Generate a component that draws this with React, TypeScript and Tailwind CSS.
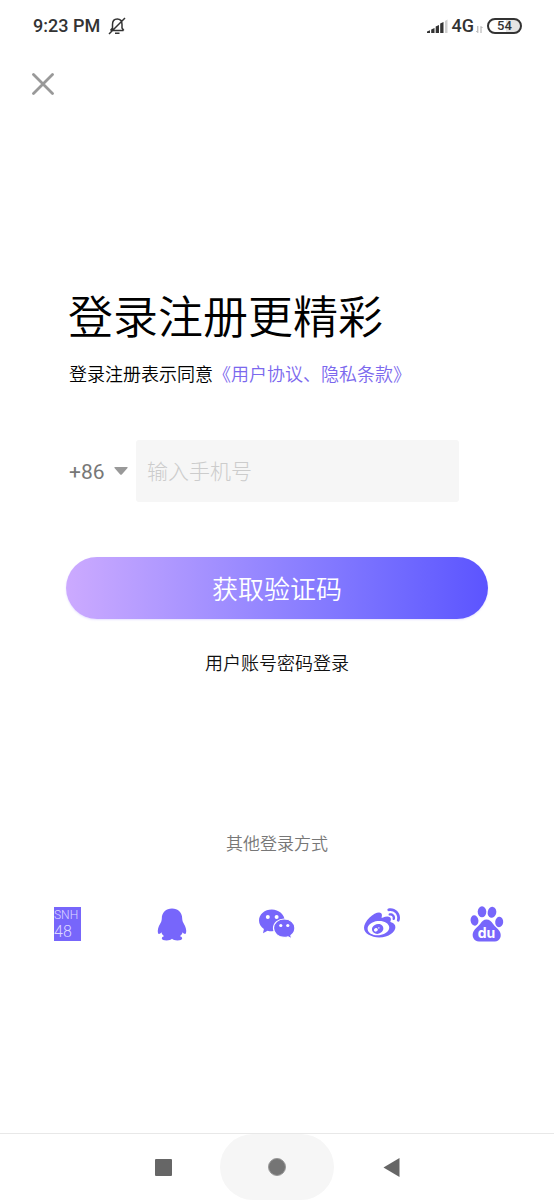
import { useState } from "react";
import type { ReactNode } from "react";
import { FaWeibo } from "react-icons/fa";

type LoginMethod = {
  name: string;
  icon: ReactNode;
};

const loginMethods: LoginMethod[] = [
  { name: "SNH48", icon: <Snh48Icon /> },
  { name: "QQ", icon: <QqIcon /> },
  { name: "微信", icon: <WechatIcon /> },
  { name: "微博", icon: <FaWeibo size={36} /> },
  { name: "百度", icon: <BaiduIcon /> },
];

export default function App() {
  const [phone, setPhone] = useState("");

  return (
    <div className="flex min-h-screen flex-col bg-white font-['Roboto','Noto_Sans_CJK_SC',sans-serif] text-black">
      <StatusBar />

      <header className="flex px-8 pt-[22px]">
        <button type="button" aria-label="关闭" className="text-[#999999]">
          <svg width="22" height="22" viewBox="0 0 22 22" fill="none" stroke="currentColor" strokeWidth="2.8" strokeLinecap="round">
            <path d="M1.5 1.5l19 19M20.5 1.5l-19 19" />
          </svg>
        </button>
      </header>

      <main className="flex flex-col pt-[194px]">
        <form className="flex flex-col px-[66px]" onSubmit={(e) => e.preventDefault()}>
          <h1 className="pl-0.5 text-[45px] leading-[60px] font-[350]">登录注册更精彩</h1>
          <p className="mt-3 pl-[3px] text-[18px] leading-[28px] font-[350] whitespace-nowrap">
            登录注册表示同意
            <a href="#terms" className="text-[#7b68ee]">《用户协议、隐私条款》</a>
          </p>

          <div className="mt-[51px] mr-[29px] flex items-center">
            <div className="relative w-[70px] shrink-0">
              <select aria-label="国家区号" className="w-full appearance-none bg-transparent pt-0.5 pl-[3px] text-[21px] leading-[30px] font-normal text-[#777777] outline-none">
                <option>+86</option>
              </select>
              <svg className="pointer-events-none absolute top-1/2 right-2 -translate-y-1/2" width="14" height="8" viewBox="0 0 14 8" fill="#999999">
                <path d="M1 0h12q1.200 0 .5 1L8 7.300q-1 1-2 0L.500 1Q-.2 0 1 0z" />
              </svg>
            </div>
            <input
              type="tel"
              aria-label="手机号"
              placeholder="输入手机号"
              value={phone}
              onChange={(e) => setPhone(e.target.value)}
              className="h-[62px] min-w-0 flex-1 rounded-[3px] bg-[#f6f6f6] px-[11px] pt-0.5 text-[21px] font-light outline-none placeholder:text-[#cccccc]"
            />
          </div>

          <button
            type="submit"
            className="mt-[55px] h-[62px] rounded-full bg-linear-to-r from-[#ccaaff] to-[#5c54ff] pt-1 text-[26px] font-[350] text-white shadow-[0_1px_2px_rgba(124,104,255,0.2)]"
          >
            获取验证码
          </button>
          <a href="#password" className="mt-[31px] self-center text-[18px] leading-[28px] font-[350] text-[#111111]">用户账号密码登录</a>
        </form>

        <section className="mt-[152px] px-[15px]">
          <h2 className="text-center text-[17px] leading-[28px] font-[350] text-[#777777]">其他登录方式</h2>
          <div className="mt-[46px] grid grid-cols-5 text-[#7766fb]">
            {loginMethods.map((method) => (
              <button key={method.name} type="button" aria-label={method.name} className="flex h-10 items-center justify-center">
                {method.icon}
              </button>
            ))}
          </div>
        </section>
      </main>

      <NavBar />
    </div>
  );
}

function StatusBar() {
  return (
    <div className="flex h-[51px] items-center justify-between pr-8 pl-[33px] text-[18px] font-medium text-[#333333]">
      <div className="flex items-center gap-2">
        <span>9:23 PM</span>
        <svg width="18" height="18" viewBox="0 0 18 18" fill="none" stroke="currentColor" strokeWidth="1.500">
          <path d="M3 13.500h12.500M4.500 13V7.500C4.500 4 6.500 2 9.200 2S14 4 14 7.500V11l1.800 2.500M4.500 11l-2 2.500M7 16.200h4.500M1 17L17 1" />
        </svg>
      </div>
      <div className="flex items-center">
        <svg width="21" height="14" viewBox="0 0 21 14" fill="currentColor">
          <path d="M0 14v-1.500L3 11.200V14zM4.200 14v-3.500L7.500 9v5zM8.700 14V7.500L12 6v8zM13.200 14V4.500L16.500 3v11z" />
          <path d="M18 14V2l2.500-1.500V14z" fill="#cfcfcf" />
        </svg>
        <span className="ml-1">4G</span>
        <svg className="mt-2 ml-0.5" width="7" height="7" viewBox="0 0 7 7" fill="none" stroke="#aaaaaa">
          <path d="M1.800 0v6.500L.3 5M5 7V.5L6.500 2" />
        </svg>
        <span className="ml-1 flex h-4 w-[35px] items-center justify-center rounded-full border-2 border-[#333333] bg-linear-to-r from-white from-55% to-[#e4e4e4] to-55% text-[13px] leading-none">54</span>
      </div>
    </div>
  );
}

function NavBar() {
  return (
    <nav className="mt-auto flex h-[67px] justify-center border-t border-[#e8e8e8] text-[#666666]">
      <button type="button" aria-label="最近任务" className="flex w-[114px] items-center justify-center">
        <span className="size-[17px] rounded-[1px] bg-current" />
      </button>
      <button type="button" aria-label="主屏幕" className="flex w-[114px] items-center justify-center rounded-full bg-[#f6f6f6]">
        <span className="size-[18px] rounded-full border border-[#999999] bg-[#757575]" />
      </button>
      <button type="button" aria-label="返回" className="flex w-[114px] items-center justify-center">
        <svg width="17" height="19" viewBox="0 0 17 19" fill="currentColor">
          <path d="M16.500 0v19L.5 9.500z" />
        </svg>
      </button>
    </nav>
  );
}

function Snh48Icon() {
  return (
    <svg width="27" height="34" viewBox="0 0 27 34">
      <path d="M0 0h27v34H0z" fill="currentColor" />
      <g fill="#ddd8ff" fontFamily="Roboto, sans-serif" fontWeight="300">
        <text x="0" y="12" fontSize="12">SNH</text>
        <text x="0" y="30" fontSize="16">48</text>
      </g>
    </svg>
  );
}

function QqIcon() {
  return (
    <svg width="30" height="33" viewBox="0 0 30 33" fill="currentColor">
      <path d="M15 .5C9 .5 4.800 4.500 4.800 10.500c0 1-.2 2.200-.6 3.200C2.600 16.500 1 19.500.8 22.500c-.1 1.800.2 3.300.9 3.500.9.2 1.800-.6 2.700-1.700.4 1.600 1.300 2.800 2.700 3.900-1.300.4-2.300 1.100-2.300 2.100 0 1.600 2 2.200 4.800 2.200 2.400 0 4.300-.6 5.400-1.700 1.100 1.100 3 1.700 5.400 1.700 2.800 0 4.800-.6 4.800-2.200 0-1-1-1.700-2.300-2.100 1.400-1.100 2.300-2.300 2.700-3.900.9 1.100 1.800 1.900 2.700 1.700.7-.2 1-1.700.9-3.500-.2-3-1.800-6-3.400-8.800-.4-1-.6-2.200-.6-3.200C25.200 4.500 21 .5 15 .5z" />
    </svg>
  );
}

function WechatIcon() {
  return (
    <svg width="36" height="30" viewBox="0 0 36 30" fill="currentColor">
      <path d="M12.800.5C5.700.5 0 5.300 0 11.500c0 3.400 1.900 6.500 4.900 8.500L4 24.200l4.500-2.500c1.300.4 2.800.6 4.300.6 7.100 0 12.800-4.800 12.800-10.800S19.900.5 12.800.5z" />
      <path d="M25.200 10c-6 0-10.700 4-10.700 9.100s4.700 9.300 10.700 9.300c1.400 0 2.700-.2 3.900-.6l3.600 2.200-.8-3.500c2.500-1.700 4-4.400 4-7.400C35.900 14 31.200 10 25.200 10z" stroke="white" strokeWidth="1.200" />
      <g fill="white">
        <circle cx="8.800" cy="8" r="2" />
        <circle cx="17.600" cy="8" r="2" />
        <circle cx="21.800" cy="16.500" r="1.600" />
        <circle cx="28.800" cy="16.500" r="1.600" />
      </g>
    </svg>
  );
}

function BaiduIcon() {
  return (
    <svg width="34" height="36" viewBox="0 0 34 36" fill="currentColor">
      <ellipse cx="4.500" cy="14.500" rx="3.900" ry="5.200" transform="rotate(-8 4.500 14.500)" />
      <ellipse cx="12" cy="5.800" rx="4.300" ry="5.500" />
      <ellipse cx="22" cy="6.300" rx="4.300" ry="5.500" transform="rotate(12 22 6.300)" />
      <ellipse cx="29.200" cy="16" rx="4" ry="5.200" transform="rotate(4 29.200 16)" />
      <path d="M16.500 13.500c3 0 4.700 1.800 6.400 4.300 1.900 2.700 4.900 4.500 6.700 7.400 2.700 4.500.4 10-4.700 10.300-2.600.2-5.200-.1-8.100-.1s-5 .3-7.800.1c-5.300-.3-7.900-5.600-5.400-10.300 1.500-2.800 4.500-4.500 6.700-7.400 1.800-2.500 3.200-4.300 6.200-4.300z" />
      <text x="16.500" y="32" textAnchor="middle" fontSize="14" fontWeight="700" fontFamily="Inter, sans-serif" fill="white">du</text>
    </svg>
  );
}
